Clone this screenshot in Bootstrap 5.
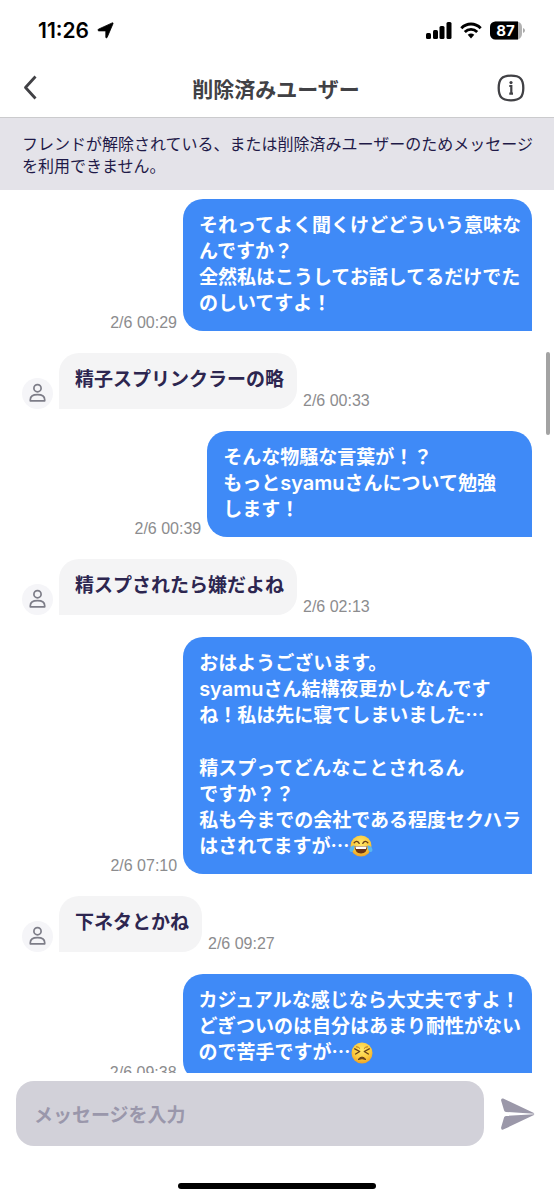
<!DOCTYPE html>
<html lang="ja">
<head>
<meta charset="utf-8">
<meta name="viewport" content="width=device-width, initial-scale=1">
<title>メッセージ</title>
<link href="https://cdn.jsdelivr.net/npm/bootstrap@5.3.0/dist/css/bootstrap.min.css" rel="stylesheet">
<style>
  body { font-family: "Noto Sans CJK JP", sans-serif; background: #fff; color: #2d2650; }
  .status-bar { height: 61px; padding: 0 29px 0 38px; color: #000; }
  .clock { font: 600 21px/26px Inter, sans-serif; }
  .title-bar { height: 57px; padding: 0 29px 2px 20px; border-bottom: 1px solid #cbcbcd; }
  .title-bar h1 { font-size: 21px; line-height: 28px; font-weight: 700; color: #414145; }
  .icon-btn { border: 0; background: none; padding: 0; display: flex; flex-shrink: 0; }
  .notice { background: #e4e3e9; color: #1f1a48; font-size: 16px; line-height: 22px; padding: 14px 16px 14px 22px; }
  .chat { padding: 9px 22px 0; gap: 22px; min-height: 0; }
  .chat > * { flex-shrink: 0; }
  .msg { gap: 6px; }
  .bubble { font-size: 19px; line-height: 26px; font-weight: 700; white-space: nowrap; }
  .bubble p { margin: 0; }
  .bubble p + p { margin-top: 27px; }
  .sent .bubble { background: #3f8af7; color: #fff; padding: 12px 11px 16px 16px; border-radius: 20px 20px 0 20px; }
  .sent .bubble-mid { padding-right: 36px; }
  .received .bubble { background: #f4f4f5; padding: 12px 13px 18px 16px; border-radius: 20px 20px 20px 0; }
  .latin { font-family: Inter, sans-serif; font-size: 20px; font-weight: 600; line-height: 20px; }
  .emoji { width: 24px; height: 24px; margin: -3px 0 0 -1px; }
  time { font: 16px/16px "Liberation Sans", sans-serif; color: #8c8c8e; white-space: nowrap; }
  .avatar { width: 31px; height: 31px; background: #f5f5f8; }
  .scroll-thumb { top: 162px; right: 4px; width: 4px; height: 83px; background: #a3a3a3; }
  .composer { padding: 8px 19px 0 16px; gap: 16px; }
  .composer input { flex: 1 1 0; min-width: 0; height: 65px; border: 0; border-radius: 18px; background: #d2d1d9; padding: 0 18px; font-size: 19px; font-weight: 700; color: #2d2650; }
  .composer input::placeholder { color: #9a97ab; opacity: 1; }
  .home-bar { width: 198px; height: 6px; margin: 37px auto 11px; background: #000; }
</style>
</head>
<body>
<svg class="position-absolute" width="0" height="0" aria-hidden="true">
  <defs>
  <symbol id="person" viewBox="0 0 31 31">
    <g fill="none" stroke="#7d7d88" stroke-width="1.7">
      <circle cx="15.5" cy="10.2" r="3.6"/>
      <path d="M8.300 22.800v-1.100c0-3.300 2.700-5.100 7.200-5.100s7.200 1.800 7.200 5.100v1.100z" stroke-linejoin="round"/>
    </g>
  </symbol>
  <radialGradient id="face" cx=".5" cy=".35" r=".7"><stop offset="0" stop-color="#ffe86b"/><stop offset=".6" stop-color="#fbc93c"/><stop offset="1" stop-color="#ea9a25"/></radialGradient>
  </defs>
</svg>

<div class="d-flex flex-column vh-100 overflow-hidden">
  <div class="status-bar d-flex align-items-center justify-content-between flex-shrink-0">
    <div class="d-flex align-items-center gap-2">
      <span class="clock">11:26</span>
      <svg width="17" height="17" viewBox="0 0 17 17"><path d="M15.200.9Q16.400.5 16 1.700L10.100 15.500Q9.200 16.700 8.800 15.200V8.900H1.700Q.2 8.300 1.400 7.200z" stroke="#000" stroke-width=".8" stroke-linejoin="round"/></svg>
    </div>
    <div class="d-flex align-items-center gap-2">
      <svg width="26" height="17" viewBox="0 0 26 17"><rect x="0" y="11" width="5" height="6" rx="1.500"/><rect x="7" y="8" width="5" height="9" rx="1.500"/><rect x="13.500" y="4" width="5" height="13" rx="1.500"/><rect x="20.500" y="0" width="5" height="17" rx="1.500"/></svg>
      <svg width="22" height="17" viewBox="0 0 22 17"><g fill="none" stroke="#000" stroke-width="2.900"><path d="M1.300 6.200Q5.500 2 11 2t9.700 4.200"/><path d="M4.800 10Q7.500 7.400 11 7.400t6.200 2.600"/></g><path d="M7.700 12.800Q11 10.300 14.300 12.800L11 16.400z"/></svg>
      <svg width="35" height="19" viewBox="0 0 35 19"><rect width="32" height="18" y=".5" rx="5.500" fill="#b2b2b2"/><path d="M5.500.5H28v18H5.500A5.500 5.500 0 0 1 0 13V6A5.500 5.500 0 0 1 5.500.5z"/><path d="M33 7q2 .6 2 2.500t-2 2.500z" fill="#aaa"/><text x="15.500" y="15" text-anchor="middle" font-family="Inter, sans-serif" font-weight="700" font-size="15" fill="#fff">87</text></svg>
    </div>
  </div>

  <header class="title-bar d-flex align-items-center justify-content-between flex-shrink-0">
    <button class="icon-btn" type="button" aria-label="戻る">
      <svg width="35" height="28" viewBox="0 0 35 28"><path d="M15.500 2.500 5.500 13.500 15.500 24.500" fill="none" stroke="#414145" stroke-width="2.800" stroke-linejoin="round"/></svg>
    </button>
    <h1 class="m-0">削除済みユーザー</h1>
    <button class="icon-btn" type="button" aria-label="情報">
      <svg width="28" height="28" viewBox="0 0 28 28"><path d="M14 1.700c9 0 12.300 3.300 12.300 12.300S23 26.300 14 26.300 1.700 23 1.700 14 5 1.700 14 1.700z" fill="none" stroke="#414145" stroke-width="2.300"/><circle cx="14" cy="8.600" r="1.600" fill="#414145"/><path d="M12.300 12h2v8M12.300 19.600h3.700" fill="none" stroke="#414145" stroke-width="2.200"/></svg>
    </button>
  </header>

  <div class="notice flex-shrink-0">フレンドが解除されている、または削除済みユーザーのためメッセージを利用できません。</div>

  <main class="chat position-relative d-flex flex-column flex-grow-1 overflow-hidden">
    <div class="msg sent d-flex align-items-end justify-content-end">
      <time>2/6 00:29</time>
      <div class="bubble"><p>それってよく聞くけどどういう意味な<br>んですか？<br>全然私はこうしてお話してるだけでた<br>のしいてすよ！</p></div>
    </div>
    <div class="msg received d-flex align-items-end">
      <svg class="avatar rounded-circle"><use href="#person"/></svg>
      <div class="bubble"><p>精子スプリンクラーの略</p></div>
      <time>2/6 00:33</time>
    </div>
    <div class="msg sent d-flex align-items-end justify-content-end">
      <time>2/6 00:39</time>
      <div class="bubble bubble-mid"><p>そんな物騒な言葉が！？<br>もっと<span class="latin">syamu</span>さんについて勉強<br>します！</p></div>
    </div>
    <div class="msg received d-flex align-items-end">
      <svg class="avatar rounded-circle"><use href="#person"/></svg>
      <div class="bubble"><p>精スプされたら嫌だよね</p></div>
      <time>2/6 02:13</time>
    </div>
    <div class="msg sent d-flex align-items-end justify-content-end">
      <time>2/6 07:10</time>
      <div class="bubble">
        <p>おはようございます。<br><span class="latin">syamu</span>さん結構夜更かしなんです<br>ね！私は先に寝てしまいました…</p>
        <p>精スプってどんなことされるん<br>ですか？？<br>私も今までの会社である程度セクハラ<br>はされてますが…<svg class="emoji" viewBox="0 0 24 24" role="img" aria-label="😂"><circle cx="12" cy="12" r="10.500" fill="url(#face)"/><path d="M5.200 8.800Q7.800 5.800 10.200 9.300M13.800 9.300Q16.200 5.800 18.800 8.800" fill="none" stroke="#68401a" stroke-width="1.400" stroke-linecap="round"/><path d="M5.500 12.300h13Q18 19.400 12 19.400T5.500 12.300z" fill="#6b3514"/><path d="M6.300 12.600h11.400l-.7 2.300H7z" fill="#fff"/><path d="M5.500 11.300Q1.500 12 .6 15.200q-.3 3 2.200 2.700Q5.400 17.200 5.500 11.300zM18.500 11.300q4 .7 4.900 3.900.3 3-2.200 2.700-2.600-.7-2.700-6.600z" fill="#58b7f0"/></svg></p>
      </div>
    </div>
    <div class="msg received d-flex align-items-end">
      <svg class="avatar rounded-circle"><use href="#person"/></svg>
      <div class="bubble"><p>下ネタとかね</p></div>
      <time>2/6 09:27</time>
    </div>
    <div class="msg sent d-flex align-items-end justify-content-end">
      <time>2/6 09:38</time>
      <div class="bubble"><p>カジュアルな感じなら大丈夫ですよ！<br>どぎついのは自分はあまり耐性がない<br>ので苦手ですが…<svg class="emoji" viewBox="0 0 24 24" role="img" aria-label="😣"><circle cx="12" cy="12" r="10.500" fill="url(#face)"/><path d="M4.800 7.800 9.700 10.500 5.600 13M19.200 7.800 14.300 10.500 18.400 13" fill="none" stroke="#68401a" stroke-width="1.400" stroke-linecap="round" stroke-linejoin="round"/><path d="M6.500 5.800Q8.500 5.600 9.800 7.300M17.500 5.800Q15.500 5.600 14.200 7.300" fill="none" stroke="#b5701c" stroke-linecap="round"/><path d="M8 18.600Q12 13.600 16 18.600 12 16.800 8 18.600z" fill="#68401a" stroke="#68401a" stroke-linejoin="round"/></svg></p></div>
    </div>
    <div class="scroll-thumb position-absolute rounded-pill"></div>
  </main>

  <form class="composer d-flex align-items-center flex-shrink-0">
    <input type="text" placeholder="メッセージを入力" aria-label="メッセージを入力">
    <button class="icon-btn" type="button" aria-label="送信">
      <svg width="35" height="32" viewBox="0 0 35 32"><path d="M3.200.6 33.400 14.700q.9.500.8 1L6 13.900Q4.500 13.700 4.100 12.500L1.100 2.600Q.9-.3 3.200.6zM3.200 31.600 33.400 17.300q.9-.5.8-1L6 17.900q-1.500.2-1.900 1.400L1.100 29.400q-.2 3.100 2.100 2.200z" fill="#9b98a9"/></svg>
    </button>
  </form>
  <div class="home-bar rounded-pill flex-shrink-0"></div>
</div>
<script src="https://cdn.jsdelivr.net/npm/bootstrap@5.3.0/dist/js/bootstrap.bundle.min.js"></script>
</body>
</html>
